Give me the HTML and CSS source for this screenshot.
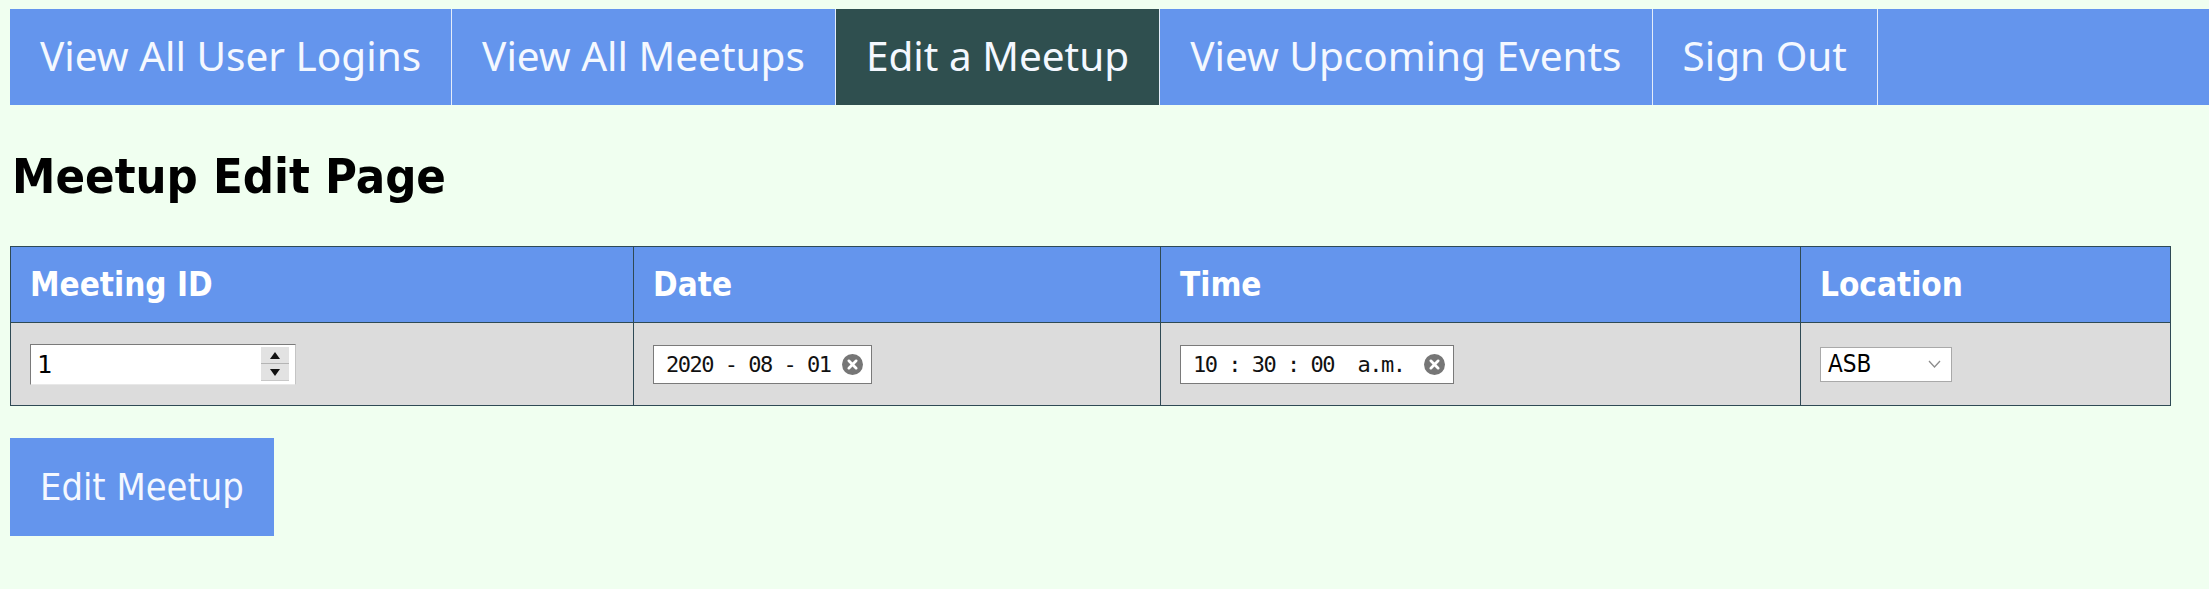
FILE: index.html
```html
<!DOCTYPE html>
<html lang="en">
<head>
<meta charset="utf-8">
<title>Meetup Edit Page</title>
<link rel="stylesheet" href="styles.css">
</head>
<body>
<nav class="topnav">
  <ul class="nav-list">
    <li class="nav-item">View All User Logins</li>
    <li class="nav-item">View All Meetups</li>
    <li class="nav-item active">Edit a Meetup</li>
    <li class="nav-item">View Upcoming Events</li>
    <li class="nav-item">Sign Out</li>
  </ul>
</nav>

<h1 class="page-title">Meetup Edit Page</h1>

<table class="meetup-table">
  <thead>
    <tr>
      <th class="col-id">Meeting ID</th>
      <th class="col-date">Date</th>
      <th class="col-time">Time</th>
      <th class="col-loc">Location</th>
    </tr>
  </thead>
  <tbody>
    <tr>
      <td>
        <div class="numbox">
          <input class="field num-field" type="text" value="1">
          <div class="spinner">
            <span class="spin-btn"><svg width="10" height="7" viewBox="0 0 10 7"><polygon points="5,0 10,7 0,7" fill="#111"/></svg></span>
            <span class="spin-btn"><svg width="10" height="7" viewBox="0 0 10 7"><polygon points="0,0 10,0 5,7" fill="#111"/></svg></span>
          </div>
        </div>
      </td>
      <td>
        <div class="dtbox date-box">
          <span class="dt-text">2020 - 08 - 01</span>
          <svg class="clear" width="21" height="21" viewBox="0 0 20 20"><circle cx="10" cy="10" r="10" fill="#767676"/><path d="M6.5 6.5 L13.5 13.5 M13.5 6.5 L6.5 13.5" stroke="#fff" stroke-width="2.6" stroke-linecap="round"/></svg>
        </div>
      </td>
      <td>
        <div class="dtbox time-box">
          <span class="dt-text">10 : 30 : 00  a.m.</span>
          <svg class="clear" width="21" height="21" viewBox="0 0 20 20"><circle cx="10" cy="10" r="10" fill="#767676"/><path d="M6.5 6.5 L13.5 13.5 M13.5 6.5 L6.5 13.5" stroke="#fff" stroke-width="2.6" stroke-linecap="round"/></svg>
        </div>
      </td>
      <td>
        <div class="selectbox">
          <span class="sel-text">ASB</span>
          <svg class="chev" width="13" height="8" viewBox="0 0 13 8"><polyline points="1,1 6.5,7 12,1" fill="none" stroke="#8c8c8c" stroke-width="1.3"/></svg>
        </div>
      </td>
    </tr>
  </tbody>
</table>

<button class="submit-btn" type="button">Edit Meetup</button>
</body>
</html>
```
FILE: styles.css
```css
html, body {
  background: #f0fff0;
}
body {
  margin: 0;
  padding: 9px 10px 0 10px;
  font-family: "Noto Sans", "DejaVu Sans", sans-serif;
  overflow: hidden;
}

.topnav {
  margin-right: -10px;
  background: #6495ed;
}
.nav-list {
  list-style: none;
  margin: 0;
  padding: 0;
  display: flex;
}
.nav-item {
  padding: 0 30px;
  height: 96px;
  line-height: 94px;
  font-size: 40.5px;
  color: #f4f8ff;
  border-right: 1px solid #e4ecfa;
  white-space: nowrap;
}
.nav-item.active {
  background: #2f4f4f;
}

.page-title {
  margin: 43px 0 42px 2px;
  font-family: "DejaVu Sans Condensed", "DejaVu Sans", sans-serif;
  font-stretch: condensed;
  font-weight: bold;
  font-size: 48.5px;
  line-height: 56px;
  color: #000;
}

.meetup-table {
  border-collapse: collapse;
  table-layout: fixed;
  width: 2160px;
}
.meetup-table th,
.meetup-table td {
  box-sizing: border-box;
  border: 1px solid #2f4a55;
  padding: 0 19px;
  text-align: left;
}
.meetup-table th {
  background: #6495ed;
  color: #fff;
  height: 76px;
  font-family: "DejaVu Sans Condensed", "DejaVu Sans", sans-serif;
  font-stretch: condensed;
  font-weight: bold;
  font-size: 33px;
}
.meetup-table td {
  background: #dcdcdc;
  height: 83px;
}
.col-id { width: 623px; }
.col-date { width: 527px; }
.col-time { width: 640px; }
.col-loc { width: 370px; }

.numbox {
  display: flex;
  align-items: center;
  width: 266px;
  height: 41px;
  box-sizing: border-box;
  background: #fff;
  border: 1px solid;
  border-color: #7a7a7a #c4c4c4 #e8e8e8 #7a7a7a;
  padding: 0 6px 0 6px;
}
.field {
  border: none;
  outline: none;
  background: transparent;
  padding: 0;
  margin: 0;
}
.num-field {
  flex: 1;
  min-width: 0;
  font-family: "DejaVu Sans Mono", monospace;
  font-size: 25px;
  color: #000;
}
.spinner {
  display: flex;
  flex-direction: column;
  width: 28px;
  height: 33px;
  background: #e2e2e2;
  border-bottom: 1px solid #c8c8c8;
}
.spin-btn {
  flex: 1;
  display: flex;
  align-items: center;
  justify-content: center;
}
.spin-btn + .spin-btn {
  border-top: 1px solid #b4b4b4;
}

.dtbox {
  display: flex;
  align-items: center;
  height: 39px;
  box-sizing: border-box;
  background: #fff;
  border: 1px solid #7a7a7a;
  padding: 0 8px 0 12px;
}
.date-box { width: 219px; }
.time-box { width: 274px; }
.dt-text {
  flex: 1;
  font-family: "DejaVu Sans Mono", monospace;
  font-size: 22px;
  letter-spacing: -1.5px;
  color: #111;
  white-space: pre;
}
.clear {
  flex: none;
}

.selectbox {
  display: flex;
  align-items: center;
  justify-content: space-between;
  width: 132px;
  height: 35px;
  box-sizing: border-box;
  background: #fff;
  border: 1px solid #a9a9a9;
  padding: 0 10px 0 7px;
}
.sel-text {
  font-family: "DejaVu Sans Condensed", "DejaVu Sans", sans-serif;
  font-stretch: condensed;
  font-size: 24px;
  color: #000;
}

.submit-btn {
  display: block;
  margin: 32px 0 0 0;
  height: 98px;
  padding: 0 30px;
  border: none;
  background: #6495ed;
  color: #f4f8ff;
  font-family: "DejaVu Sans Condensed", "DejaVu Sans", sans-serif;
  font-stretch: condensed;
  font-size: 37.7px;
}
```
